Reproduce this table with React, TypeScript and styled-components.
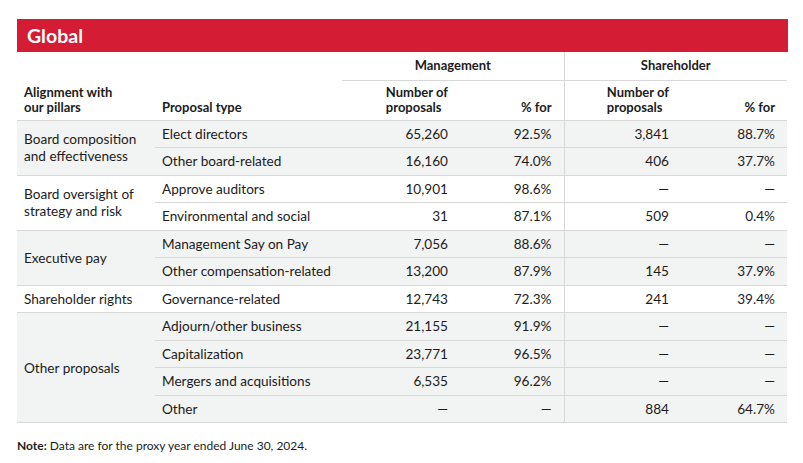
import styled, { createGlobalStyle } from "styled-components";

const GlobalStyle = createGlobalStyle`
  html, body {
    margin: 0;
    padding: 0;
    background: #fff;
  }
  body {
    font-family: Lato, "Liberation Sans", Arial, sans-serif;
    color: #1c1c1c;
  }
`;

const Page = styled.div`
  padding: 19px 15px 0 17px;
  width: 771px;
`;

const TitleBar = styled.div`
  height: 33px;
  background: #d41c35;
  color: #fff;
  font-size: 19.5px;
  font-weight: 700;
  display: flex;
  align-items: center;
  padding-left: 10px;
`;

const Table = styled.table`
  width: 770px;
  border-collapse: collapse;
  table-layout: fixed;
  font-size: 13.6px;
`;

const GroupRow = styled.tr`
  height: 28px;
`;

const HeadRow = styled.tr`
  height: 40px;
`;

const GroupHead = styled.th<{ $divider?: boolean }>`
  font-size: 13px;
  font-weight: 700;
  text-align: center;
  border-bottom: 1px solid #d8d8d8;
  border-left: ${(p) => (p.$divider ? "1px solid #d8d8d8" : "none")};
  padding: 0 0 1px;
`;

const Blank = styled.th`
  padding: 0;
`;

const ColHead = styled.th<{ $right?: boolean; $divider?: boolean }>`
  font-size: 13px;
  font-weight: 700;
  line-height: 15px;
  vertical-align: bottom;
  text-align: ${(p) => (p.$right ? "right" : "left")};
  padding: 0 ${(p) => (p.$right ? "12px" : "0")} 5px
    ${(p) => (p.$right ? "0" : "7px")};
  border-bottom: 1px solid #d8d8d8;
  border-left: ${(p) => (p.$divider ? "1px solid #d8d8d8" : "none")};
`;

const NumHead = styled.span`
  display: inline-block;
  text-align: left;
`;

const Row = styled.tr<{ $shade: boolean }>`
  height: 27.5px;
  background: ${(p) => (p.$shade ? "#f2f3f3" : "#fff")};
`;

const PillarCell = styled.td`
  padding: 1px 6px 0 7px;
  line-height: 17px;
  vertical-align: middle;
  border-bottom: 1px solid #d8d8d8;
`;

const TypeCell = styled.td`
  padding: 0 0 0 7px;
  border-bottom: 1px solid #d8d8d8;
  white-space: nowrap;
`;

const NumCell = styled.td<{ $divider?: boolean }>`
  padding: 0 12px 0 0;
  text-align: right;
  border-bottom: 1px solid #d8d8d8;
  border-left: ${(p) => (p.$divider ? "1px solid #d8d8d8" : "none")};
`;

const Note = styled.p`
  margin: 15px 0 0;
  font-size: 12px;
`;

type Item = {
  type: string;
  mNum: string;
  mPct: string;
  sNum: string;
  sPct: string;
};

type Group = { pillar: string; items: Item[] };

const D = "—";

const groups: Group[] = [
  {
    pillar: "Board composition and effectiveness",
    items: [
      { type: "Elect directors", mNum: "65,260", mPct: "92.5%", sNum: "3,841", sPct: "88.7%" },
      { type: "Other board-related", mNum: "16,160", mPct: "74.0%", sNum: "406", sPct: "37.7%" },
    ],
  },
  {
    pillar: "Board oversight of strategy and risk",
    items: [
      { type: "Approve auditors", mNum: "10,901", mPct: "98.6%", sNum: D, sPct: D },
      { type: "Environmental and social", mNum: "31", mPct: "87.1%", sNum: "509", sPct: "0.4%" },
    ],
  },
  {
    pillar: "Executive pay",
    items: [
      { type: "Management Say on Pay", mNum: "7,056", mPct: "88.6%", sNum: D, sPct: D },
      { type: "Other compensation-related", mNum: "13,200", mPct: "87.9%", sNum: "145", sPct: "37.9%" },
    ],
  },
  {
    pillar: "Shareholder rights",
    items: [
      { type: "Governance-related", mNum: "12,743", mPct: "72.3%", sNum: "241", sPct: "39.4%" },
    ],
  },
  {
    pillar: "Other proposals",
    items: [
      { type: "Adjourn/other business", mNum: "21,155", mPct: "91.9%", sNum: D, sPct: D },
      { type: "Capitalization", mNum: "23,771", mPct: "96.5%", sNum: D, sPct: D },
      { type: "Mergers and acquisitions", mNum: "6,535", mPct: "96.2%", sNum: D, sPct: D },
      { type: "Other", mNum: D, mPct: D, sNum: "884", sPct: "64.7%" },
    ],
  },
];

const App = () => {
  return (
    <Page>
      <GlobalStyle />
      <TitleBar>Global</TitleBar>
      <Table>
        <colgroup>
          <col style={{ width: 138 }} />
          <col style={{ width: 187 }} />
          <col style={{ width: 118 }} />
          <col style={{ width: 104 }} />
          <col style={{ width: 117 }} />
          <col style={{ width: 106 }} />
        </colgroup>
        <thead>
          <GroupRow>
            <Blank colSpan={2} />
            <GroupHead colSpan={2}>Management</GroupHead>
            <GroupHead colSpan={2} $divider>
              Shareholder
            </GroupHead>
          </GroupRow>
          <HeadRow>
            <ColHead>
              Alignment with
              <br />
              our pillars
            </ColHead>
            <ColHead>Proposal type</ColHead>
            <ColHead $right>
              <NumHead>
                Number of
                <br />
                proposals
              </NumHead>
            </ColHead>
            <ColHead $right>% for</ColHead>
            <ColHead $right $divider>
              <NumHead>
                Number of
                <br />
                proposals
              </NumHead>
            </ColHead>
            <ColHead $right>% for</ColHead>
          </HeadRow>
        </thead>
        <tbody>
          {groups.map((group, gi) =>
            group.items.map((item, ii) => (
              <Row key={`${gi}-${ii}`} $shade={gi % 2 === 0}>
                {ii === 0 && (
                  <PillarCell rowSpan={group.items.length}>
                    {group.pillar}
                  </PillarCell>
                )}
                <TypeCell>{item.type}</TypeCell>
                <NumCell>{item.mNum}</NumCell>
                <NumCell>{item.mPct}</NumCell>
                <NumCell $divider>{item.sNum}</NumCell>
                <NumCell>{item.sPct}</NumCell>
              </Row>
            ))
          )}
        </tbody>
      </Table>
      <Note>
        <strong>Note:</strong> Data are for the proxy year ended June 30, 2024.
      </Note>
    </Page>
  );
};

export default App;
